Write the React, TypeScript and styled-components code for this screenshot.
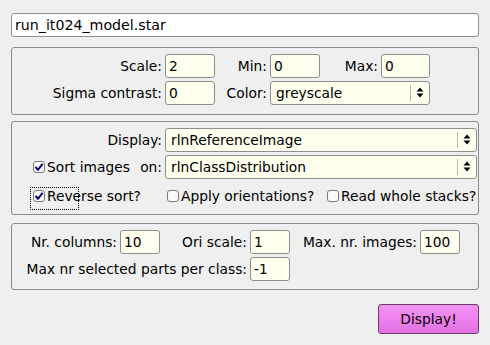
import React from "react";
import styled, { createGlobalStyle } from "styled-components";

const GlobalStyle = createGlobalStyle`
  html, body {
    margin: 0;
    padding: 0;
    background: #efefef;
  }
  body {
    font-family: "DejaVu Sans", "Liberation Sans", sans-serif;
    font-size: 13.8px;
    color: #000;
  }
`;

const Window = styled.div`
  width: 490px;
  height: 345px;
  box-sizing: border-box;
  padding: 13px 11px 0 11px;
  display: flex;
  flex-direction: column;
  background: #efefef;
`;

const FileField = styled.div`
  width: 468px;
  height: 24px;
  box-sizing: border-box;
  border: 1px solid #8e8e8e;
  border-radius: 3px;
  background: #ffffff;
  display: flex;
  align-items: center;
  padding-left: 3px;
  font-size: 14.2px;
`;

const Panel = styled.div<{ $h: number; $mt: number }>`
  width: 468px;
  height: ${(p) => p.$h}px;
  margin-top: ${(p) => p.$mt}px;
  box-sizing: border-box;
  border: 1px solid #8a8a8a;
  border-radius: 3px;
  padding-top: 6px;
  display: flex;
  flex-direction: column;
  gap: 4px;
`;

const Row = styled.div`
  display: flex;
  align-items: center;
  height: 23px;
`;

const Label = styled.div<{ $w: number }>`
  width: ${(p) => p.$w}px;
  flex: none;
  text-align: right;
  padding-right: 3px;
  box-sizing: border-box;
  white-space: nowrap;
`;

const Field = styled.div<{ $w: number }>`
  width: ${(p) => p.$w}px;
  height: 24px;
  flex: none;
  box-sizing: border-box;
  border: 1px solid #8e8e8e;
  border-radius: 3px;
  background: #ffffee;
  display: flex;
  align-items: center;
  padding-left: 3px;
  white-space: nowrap;
  overflow: hidden;
`;

const Choice = styled(Field)`
  position: relative;
  padding-left: 5px;
`;

const ChoiceArrow = styled.div`
  position: absolute;
  right: 0;
  top: 3px;
  bottom: 3px;
  width: 18px;
  border-left: 1px solid #b8b8a8;
  display: flex;
  align-items: center;
  justify-content: center;
`;

const SortLabel = styled.div`
  width: 153px;
  flex: none;
  display: flex;
  justify-content: space-between;
  align-items: center;
  padding: 0 3px 0 21px;
  box-sizing: border-box;
  white-space: nowrap;
`;

const CheckRow = styled.div`
  display: flex;
  align-items: center;
  height: 24px;
  margin-top: 2px;
  padding-left: 21px;
`;

const CheckItem = styled.div<{ $w: number }>`
  position: relative;
  width: ${(p) => p.$w}px;
  flex: none;
  display: flex;
  align-items: center;
  white-space: nowrap;
`;

const Box = styled.span`
  width: 12px;
  height: 12px;
  flex: none;
  box-sizing: border-box;
  border: 1px solid #7a7a7a;
  border-radius: 3px;
  background: #fafafa;
  display: inline-flex;
  align-items: center;
  justify-content: center;
  margin-right: 2px;
`;

const FocusRing = styled.span`
  position: absolute;
  left: -3px;
  top: -1px;
  width: 49px;
  height: 23px;
  box-sizing: border-box;
  border: 1px dotted #000;
  pointer-events: none;
`;

const Footer = styled.div`
  display: flex;
  justify-content: flex-end;
  margin-top: 14px;
`;

const DisplayButton = styled.button`
  width: 101px;
  height: 30px;
  box-sizing: border-box;
  border: 1px solid #6e3a6e;
  border-radius: 3px;
  background: linear-gradient(#f293f2, #ec7eec 60%, #e070e0);
  font-family: "DejaVu Sans", "Liberation Sans", sans-serif;
  font-size: 13.8px;
  color: #000;
  padding: 0;
`;

const Arrows = () => (
  <svg width="8" height="11" viewBox="0 0 8 11">
    <path d="M4 0.5 L7.5 4.5 L0.5 4.5 Z" fill="#000" />
    <path d="M0.5 6.5 L7.5 6.5 L4 10.5 Z" fill="#000" />
  </svg>
);

const Tick = () => (
  <svg width="10" height="10" viewBox="0 0 10 10">
    <path d="M1.5 5 L4 7.8 L8.6 1.8" stroke="#00007a" strokeWidth="2" fill="none" />
  </svg>
);

const Check: React.FC<{ checked?: boolean; w: number; focus?: boolean; children: React.ReactNode }> = ({
  checked,
  w,
  focus,
  children,
}) => (
  <CheckItem $w={w}>
    {focus && <FocusRing />}
    <Box>{checked && <Tick />}</Box>
    {children}
  </CheckItem>
);

const App: React.FC = () => {
  return (
    <Window>
      <GlobalStyle />
      <FileField>run_it024_model.star</FileField>

      <Panel $h={68} $mt={10}>
        <Row>
          <Label $w={153}>Scale:</Label>
          <Field $w={50}>2</Field>
          <Label $w={55}>Min:</Label>
          <Field $w={50}>0</Field>
          <Label $w={61}>Max:</Label>
          <Field $w={49}>0</Field>
        </Row>
        <Row>
          <Label $w={153}>Sigma contrast:</Label>
          <Field $w={50}>0</Field>
          <Label $w={55}>Color:</Label>
          <Choice $w={160}>
            greyscale
            <ChoiceArrow>
              <Arrows />
            </ChoiceArrow>
          </Choice>
        </Row>
      </Panel>

      <Panel $h={94} $mt={6}>
        <Row>
          <Label $w={153}>Display:</Label>
          <Choice $w={312}>
            rlnReferenceImage
            <ChoiceArrow>
              <Arrows />
            </ChoiceArrow>
          </Choice>
        </Row>
        <Row>
          <SortLabel>
            <Check checked w={100}>
              Sort images
            </Check>
            <span>on:</span>
          </SortLabel>
          <Choice $w={312}>
            rlnClassDistribution
            <ChoiceArrow>
              <Arrows />
            </ChoiceArrow>
          </Choice>
        </Row>
        <CheckRow>
          <Check checked focus w={134}>
            Reverse sort?
          </Check>
          <Check w={160}>Apply orientations?</Check>
          <Check w={150}>Read whole stacks?</Check>
        </CheckRow>
      </Panel>

      <Panel $h={67} $mt={8}>
        <Row>
          <Label $w={108}>Nr. columns:</Label>
          <Field $w={40}>10</Field>
          <Label $w={90}>Ori scale:</Label>
          <Field $w={40}>1</Field>
          <Label $w={130}>Max. nr. images:</Label>
          <Field $w={40}>100</Field>
        </Row>
        <Row>
          <Label $w={238}>Max nr selected parts per class:</Label>
          <Field $w={40}>-1</Field>
        </Row>
      </Panel>

      <Footer>
        <DisplayButton>Display!</DisplayButton>
      </Footer>
    </Window>
  );
};

export default App;
